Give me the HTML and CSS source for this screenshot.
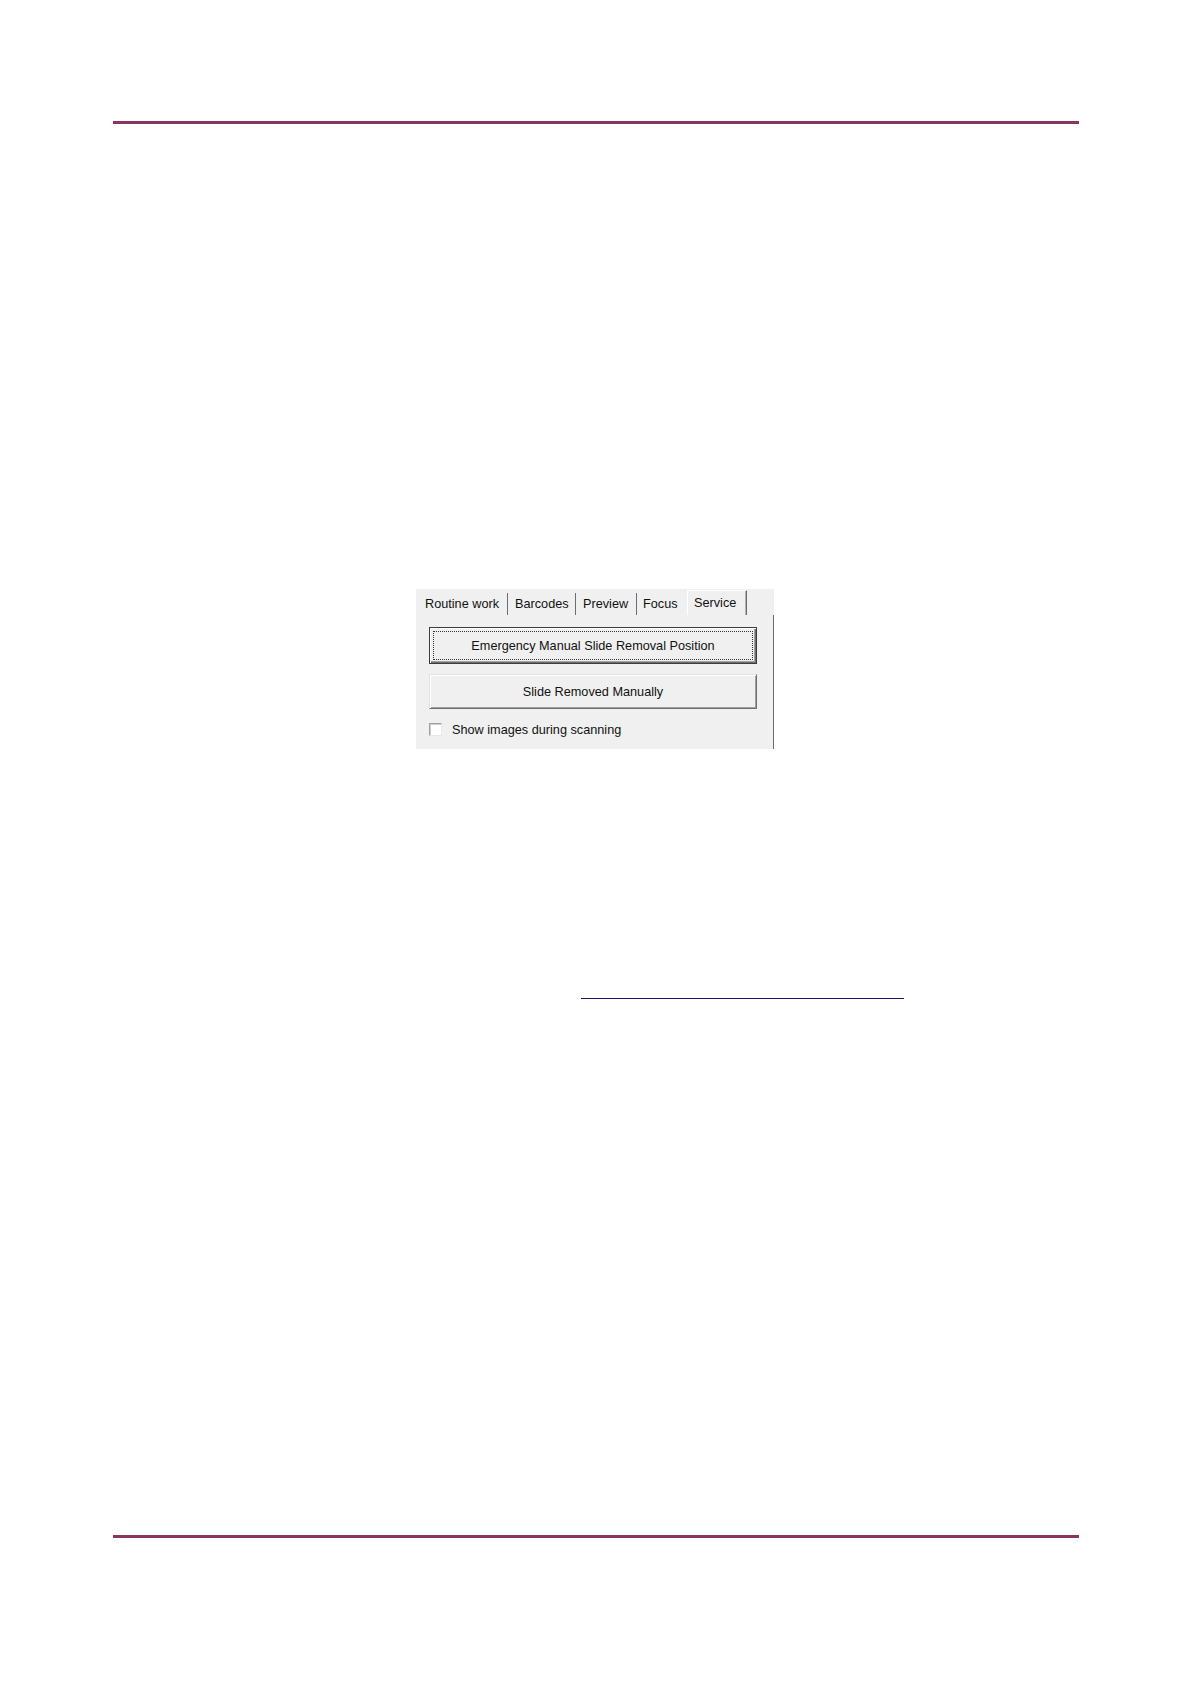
FILE: index.html
```html
<!DOCTYPE html>
<html>
<head>
<meta charset="utf-8">
<title>Service tab</title>
<link rel="stylesheet" href="styles.css">
</head>
<body>
<div class="page">
  <div class="rule rule-top"></div>

  <div class="dialog">
    <div class="tabs">
      <div class="tab tab-1">Routine work</div>
      <div class="tab tab-2">Barcodes</div>
      <div class="tab tab-3">Preview</div>
      <div class="tab tab-4">Focus</div>
      <div class="tab tab-active">Service</div>
      <div class="tab-fill"></div>
    </div>
    <div class="panel">
      <div class="btn btn-default"><span class="focus">Emergency Manual Slide Removal Position</span></div>
      <div class="btn btn-plain">Slide Removed Manually</div>
      <label class="check-row"><span class="checkbox"></span><span class="check-label">Show images during scanning</span></label>
    </div>
  </div>

  <div class="link-line"></div>

  <div class="rule rule-bottom"></div>
</div>
</body>
</html>
```

FILE: styles.css
```css
html, body {
  margin: 0;
  padding: 0;
  background: #ffffff;
}

.page {
  width: 1190px;
  height: 1684px;
  padding-top: 121px;
  box-sizing: border-box;
  font-family: "Liberation Sans", Arial, sans-serif;
}

.rule {
  margin-left: 113px;
  width: 966px;
  height: 3px;
  background: #8a3462;
}

.rule-bottom {
  margin-top: 536px;
}

.dialog {
  margin-top: 465px;
  margin-left: 416px;
  width: 358px;
  font-size: 12.7px;
  color: #111111;
}

.tabs {
  display: flex;
  height: 26px;
  background: #f0f0f0;
}

.tab {
  box-sizing: border-box;
  margin-top: 4px;
  height: 22px;
  padding-top: 3px;
  line-height: 16px;
  white-space: nowrap;
}

.tab-1 { width: 92px; padding-left: 9px; border-right: 1px solid #6e6e6e; }
.tab-2 { width: 68px; padding-left: 7px; border-right: 1px solid #6e6e6e; }
.tab-3 { width: 61px; padding-left: 7px; border-right: 1px solid #6e6e6e; }
.tab-4 { width: 50px; padding-left: 6px; }

.tab-active {
  width: 60px;
  margin-top: 1px;
  height: 25px;
  padding-top: 4px;
  padding-left: 6px;
  border-left: 1px solid #ffffff;
  border-top: 1px solid #ffffff;
  border-right: 1px solid #6a6a6a;
  box-shadow: inset -1px 0 0 #b4b4b4;
}

.tab-fill {
  flex: 1;
}

.panel {
  box-sizing: border-box;
  height: 134px;
  background: #f0f0f0;
  border-right: 1px solid #6e6e6e;
  padding: 12px 0 0 13px;
}

.btn {
  box-sizing: border-box;
  width: 328px;
  background: #f0f0f0;
  display: flex;
  align-items: center;
  justify-content: center;
  line-height: 16px;
}

.btn-default {
  height: 37px;
  border: 1px solid #3c3c3c;
  box-shadow: inset 1px 1px 0 #ffffff, inset -1px -1px 0 #6e6e6e, inset -2px -2px 0 #a0a0a0;
  padding: 3px;
}

.focus {
  flex: 1;
  align-self: stretch;
  display: flex;
  align-items: center;
  justify-content: center;
  border: 1px dotted #333333;
  padding-top: 1px;
}

.btn-plain {
  margin-top: 10px;
  height: 35px;
  border-top: 1px solid #e3e3e3;
  border-left: 1px solid #e3e3e3;
  border-right: 1px solid #6e6e6e;
  border-bottom: 1px solid #6e6e6e;
  box-shadow: inset 1px 1px 0 #ffffff, inset -1px -1px 0 #a0a0a0;
  padding-top: 1px;
}

.check-row {
  display: flex;
  align-items: center;
  margin-top: 13px;
  height: 15px;
}

.checkbox {
  box-sizing: border-box;
  width: 13px;
  height: 13px;
  background: #ffffff;
  border-top: 1px solid #a0a0a0;
  border-left: 1px solid #a0a0a0;
  border-right: 1px solid #e8e8e8;
  border-bottom: 1px solid #e8e8e8;
  box-shadow: inset 1px 1px 0 #cfcfcf;
}

.check-label {
  margin-left: 10px;
  line-height: 16px;
}

.link-line {
  margin-top: 249px;
  margin-left: 581px;
  width: 323px;
  height: 1px;
  background: #1a0f6b;
}
```
